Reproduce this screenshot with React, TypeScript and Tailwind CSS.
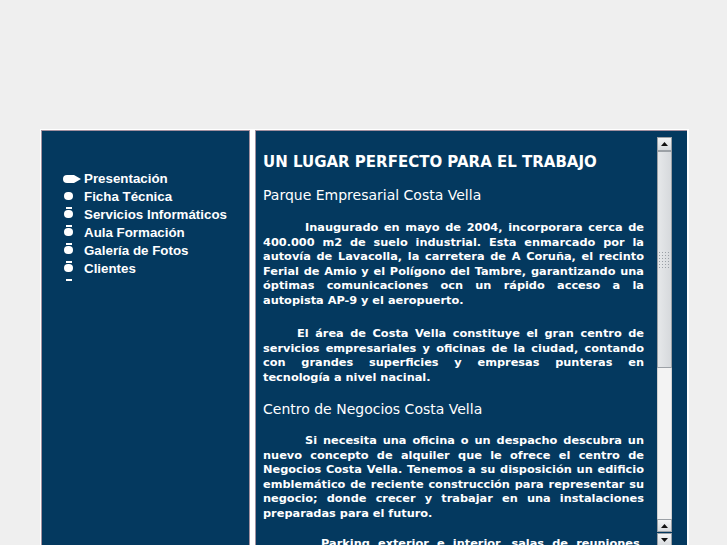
import React from "react";

const menu = [
  "Presentación",
  "Ficha Técnica",
  "Servicios Informáticos",
  "Aula Formación",
  "Galería de Fotos",
  "Clientes",
];

function Bullet({ i }: { i: number }) {
  if (i === 0) {
    return (
      <div className="w-[19px] h-[18px] flex items-center -ml-[1px]">
        <svg width="18" height="8" viewBox="0 0 18 8">
          <path d="M4 0 H11 L18 4 L11 8 H4 A4 4 0 0 1 4 0 Z" fill="#ffffff" />
        </svg>
      </div>
    );
  }
  if (i === 1) {
    return (
      <div className="w-[18px] h-[18px] flex flex-col pt-[4px]">
        <div className="w-[9px] h-[8px] rounded-full bg-white" />
      </div>
    );
  }
  return (
    <div className="w-[18px] h-[18px] flex flex-col pt-[1px]">
      <div className="w-[9px] flex justify-center">
        <div className="w-[6px] h-[2px] bg-white" />
      </div>
      <div className="h-[1px]" />
      <div className="w-[9px] h-[8px] rounded-full bg-white" />
    </div>
  );
}

function ScrollBtn({ up, h }: { up: boolean; h: string }) {
  return (
    <div
      className={`${h} w-[15px] border border-[#9ca1a6] bg-gradient-to-b from-[#f4f5f6] to-[#d9dcdf] flex items-center justify-center`}
    >
      <svg width="7" height="4" viewBox="0 0 7 4">
        {up ? (
          <path d="M0 4 L3.5 0 L7 4 Z" fill="#111" />
        ) : (
          <path d="M0 0 L3.5 4 L7 0 Z" fill="#111" />
        )}
      </svg>
    </div>
  );
}

function Grip() {
  const dots: React.ReactNode[] = [];
  for (let r = 0; r < 6; r++) {
    for (let c = 0; c < 4; c++) {
      dots.push(
        <rect key={`${r}-${c}`} x={c * 3} y={r * 3} width="1" height="1" fill="#9aa0a6" />
      );
    }
  }
  return (
    <svg width="11" height="17" viewBox="0 0 11 17">
      {dots}
    </svg>
  );
}

export default function App() {
  const body =
    "text-white font-bold text-[11.33px] leading-[14.6px] text-justify";
  return (
    <div
      className="h-screen overflow-hidden bg-[#efefef] pt-[129px] pl-[40px]"
      style={{ fontFamily: '"DejaVu Sans", sans-serif' }}
    >
      <div className="w-[649px] h-[500px] bg-white pt-[1px] pl-[1px] pr-[2px] flex gap-[5px]">
        {/* Left cell */}
        <div className="w-[209px] h-full bg-[#04395f] border-t border-l border-r border-[#a2909f]">
          <div
            className="pt-[39px] pl-[22px] text-white font-bold text-[13.33px] leading-[18px]"
            style={{ fontFamily: '"Liberation Sans", Arial, sans-serif' }}
          >
            {menu.map((m, i) => (
              <div key={m} className="flex h-[18px] items-center">
                <Bullet i={i} />
                <span className="ml-[2px]">{m}</span>
              </div>
            ))}
            <div className="w-[9px] flex justify-center pt-[1px]">
              <div className="w-[6px] h-[2px] bg-white" />
            </div>
          </div>
        </div>

        {/* Right cell */}
        <div className="flex-1 h-full bg-[#04395f] border-t border-l border-[#a2909f] pt-[6px] pl-[7px] pr-[15px]">
          <div className="flex h-full">
            <div className="flex-1 pr-[13px] text-white">
              <h1 className="mt-[16px] text-[15px] leading-[18px] font-bold">
                UN LUGAR PERFECTO PARA EL TRABAJO
              </h1>
              <h2 className="mt-[16px] text-[14px] leading-[17px] font-normal">
                Parque Empresarial Costa Vella
              </h2>
              <p className={`${body} mt-[16px] indent-[42px]`}>
                Inaugurado en mayo de 2004, incorporara cerca de 400.000 m2 de
                suelo industrial. Esta enmarcado por la autovía de Lavacolla, la
                carretera de A Coruña, el recinto Ferial de Amio y el Polígono
                del Tambre, garantizando una óptimas comunicaciones ocn un
                rápido acceso a la autopista AP-9 y el aeropuerto.
              </p>
              <p className={`${body} mt-[18.6px] indent-[34px]`}>
                El área de Costa Vella constituye el gran centro de servicios
                empresariales y oficinas de la ciudad, contando con grandes
                superficies y empresas punteras en tecnología a nivel nacinal.
              </p>
              <h2 className="mt-[16px] text-[14px] leading-[17px] font-normal">
                Centro de Negocios Costa Vella
              </h2>
              <p className={`${body} mt-[15.5px] indent-[42px]`}>
                Si necesita una oficina o un despacho descubra un nuevo concepto
                de alquiler que le ofrece el centro de Negocios Costa Vella.
                Tenemos a su disposición un edificio emblemático de reciente
                construcción para representar su negocio; donde crecer y
                trabajar en una instalaciones preparadas para el futuro.
              </p>
              <p className={`${body} mt-[15px] indent-[58px]`}>
                Parking exterior e interior, salas de reuniones, salas de
                formación, cafetería y servicio de recepción para todas las
                empresas.
              </p>
            </div>
            {/* Scrollbar */}
            <div className="w-[15px] flex flex-col">
              <ScrollBtn up h="h-[14px]" />
              <div className="h-[217px] w-[15px] border border-[#9ca1a6] bg-gradient-to-r from-[#e6e8ea] to-[#d6d9dc] flex items-start justify-center pt-[100px]">
                <Grip />
              </div>
              <div className="h-[151px] w-[15px] bg-[#f3f3f3] border-x border-[#d0d0d0]" />
              <ScrollBtn up h="h-[13px]" />
              <div className="h-[1px]" />
              <ScrollBtn up={false} h="h-[13px]" />
            </div>
          </div>
        </div>
      </div>
    </div>
  );
}
